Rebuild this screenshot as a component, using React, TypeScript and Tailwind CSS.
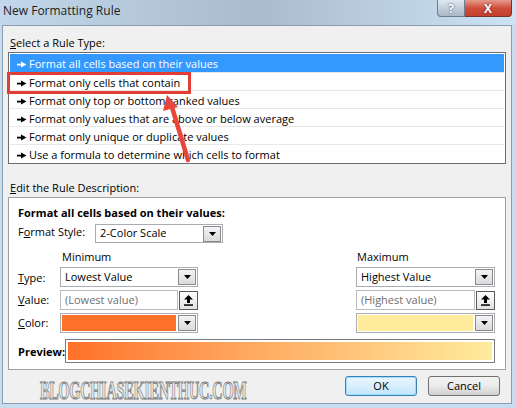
import React from "react";

const rules = [
  "Format all cells based on their values",
  "Format only cells that contain",
  "Format only top or bottom ranked values",
  "Format only values that are above or below average",
  "Format only unique or duplicate values",
  "Use a formula to determine which cells to format",
];

const Bullet = ({ color }: { color: string }) => (
  <svg width="10" height="7" viewBox="0 0 10 7" className="shrink-0">
    <rect x="0" y="2.7" width="5" height="1.8" fill={color} />
    <path d="M4 0.5 L9.5 3.5 L4 6.5Z" fill={color} />
  </svg>
);

const DropBtn = () => (
  <div className="flex h-[16px] w-[18px] shrink-0 items-center justify-center border border-[#8a8a8a] bg-gradient-to-b from-[#f4f4f4] to-[#dadada]">
    <svg width="7" height="4" viewBox="0 0 7 4">
      <path d="M0 0H7L3.5 4Z" fill="#000" />
    </svg>
  </div>
);

const Combo = ({ text, className }: { text: string; className: string }) => (
  <div className={`flex items-center justify-between border border-[#a8adb3] bg-white pl-[4px] pr-[1px] ${className}`}>
    <span>{text}</span>
    <DropBtn />
  </div>
);

const ValueBox = ({ text, className }: { text: string; className: string }) => (
  <div className={`flex h-[20px] items-center ${className}`}>
    <div className="flex h-full flex-1 items-center border border-[#b8bcc2] bg-white pl-[4px] text-[#6d6d6d]">{text}</div>
    <div className="ml-[1px] flex h-[19px] w-[19px] items-center justify-center border border-[#5a5a5a] bg-gradient-to-b from-white to-[#e2e2e2]">
      <svg width="9" height="11" viewBox="0 0 9 11">
        <path d="M4.5 0 L9 4.5 H6 V8 H3 V4.5 H0Z" fill="#000" />
        <rect x="0" y="9.3" width="9" height="1.5" fill="#000" />
      </svg>
    </div>
  </div>
);

const ColorBox = ({ color, className }: { color: string; className: string }) => (
  <div className={`flex h-[20px] items-center border border-[#a8adb3] bg-white p-[1px] ${className}`}>
    <div className={`mr-[2px] h-full flex-1 ${color}`} />
    <DropBtn />
  </div>
);

export default function App() {
  return (
    <div className="relative h-[408px] w-[516px] overflow-hidden bg-[#c7dcef] text-[11px] text-black [font-family:'Open_Sans',sans-serif]">
      {/* title bar */}
      <div className="flex h-[25px] items-start justify-between bg-gradient-to-r from-[#c2d7eb] via-[#a9bccd] to-[#cce2f5]">
        <div className="pl-[3px] pt-[3px] text-[12px] leading-[16px] text-[#1e1e1e]">New Formatting Rule</div>
        <div className="mr-[4px] flex">
          <div className="flex h-[17px] w-[28px] items-center justify-center rounded-bl-[4px] border border-t-0 border-[#6d7e92] bg-gradient-to-b from-[#dfe7f0] to-[#a9b8c9] text-[12px] font-bold leading-[15px] text-white [text-shadow:0_0_2px_#2b3d52]">
            ?
          </div>
          <div className="flex h-[17px] w-[47px] items-center justify-center rounded-br-[4px] border border-l-0 border-t-0 border-[#7a3328] bg-gradient-to-b from-[#e59a8d] via-[#cf4d3b] to-[#c4402e] text-[12px] font-bold leading-[15px] text-white [text-shadow:0_0_2px_#5a1a10]">
            X
          </div>
        </div>
      </div>

      {/* client area */}
      <div className="ml-[2px] flex h-[379px] w-[510px] flex-col border border-[#8c9bad] bg-[#f0f0f0]">
        <div className="pl-[7px] pt-[10px] leading-[14px]">
          <span className="underline">S</span>elect a Rule Type:
        </div>
        <div className="ml-[5px] mt-[2px] w-[498px] border border-[#6e6e6e] bg-white p-[1px]">
          {rules.map((r, i) => (
            <div
              key={r}
              className={`flex h-[18px] items-center gap-[2px] pl-[7px] pt-[3px] ${
                i === 0 ? "bg-[#3399ff] text-white" : "border-t border-[#e8e8e8]"
              }`}
            >
              <Bullet color={i === 0 ? "#fff" : "#000"} />
              <span>{r}</span>
            </div>
          ))}
        </div>

        <div className="mt-[17px] pl-[7px] leading-[14px]">
          <span className="underline">E</span>dit the Rule Description:
        </div>
        <div className="ml-[5px] mt-[2px] flex w-[498px] flex-col border border-[#a0a0a0] bg-white pb-[6px] pl-[9px] pr-[10px] pt-[8px]">
          <div className="font-bold leading-[14px]">Format all cells based on their values:</div>
          <div className="mt-[4px] flex">
            <div className="w-[77px] pt-[1px] leading-[14px]">
              F<span className="underline">o</span>rmat Style:
            </div>
            <Combo text="2-Color Scale" className="h-[19px] w-[128px]" />
          </div>
          <div className="mt-[7px] flex h-[14px] items-center leading-[14px]">
            <div className="w-[42px]" />
            <div className="w-[138px] pl-[2px]">Minimum</div>
            <div className="flex-1" />
            <div className="w-[139px] pl-[1px]">Maximum</div>
          </div>
          <div className="mt-[3px] flex items-center">
            <div className="w-[42px] pt-[3px]">
              <span className="underline">T</span>ype:
            </div>
            <Combo text="Lowest Value" className="h-[20px] w-[138px]" />
            <div className="flex-1" />
            <Combo text="Highest Value" className="h-[20px] w-[139px]" />
          </div>
          <div className="mt-[3px] flex items-center">
            <div className="w-[42px]">
              <span className="underline">V</span>alue:
            </div>
            <ValueBox text="(Lowest value)" className="w-[138px]" />
            <div className="flex-1" />
            <ValueBox text="(Highest value)" className="w-[139px]" />
          </div>
          <div className="mt-[3px] flex items-center">
            <div className="w-[42px]">
              <span className="underline">C</span>olor:
            </div>
            <ColorBox color="bg-[#ff7128]" className="w-[138px]" />
            <div className="flex-1" />
            <ColorBox color="bg-[#ffeb9c]" className="w-[139px]" />
          </div>
          <div className="mt-[6px] flex items-center">
            <div className="w-[47px] pt-[2px] font-bold">Preview:</div>
            <div className="h-[24px] w-[430px] border border-[#7a7a7a] p-[2px]">
              <div className="h-full w-full bg-gradient-to-r from-[#ff7128] to-[#ffeb9c]" />
            </div>
          </div>
        </div>

        <div className="mt-[6px] flex justify-end gap-[11px] pr-[11px]">
          <div className="flex h-[20px] w-[72px] items-center justify-center rounded-[3px] border border-[#3c7fb1] bg-gradient-to-b from-[#eaf6fd] via-[#d9effc] to-[#bee6fd] shadow-[inset_0_0_0_1px_#9de0fb]">
            OK
          </div>
          <div className="flex h-[20px] w-[72px] items-center justify-center rounded-[3px] border border-[#707070] bg-gradient-to-b from-[#f2f2f2] via-[#ebebeb] to-[#cfcfcf]">
            Cancel
          </div>
        </div>
      </div>

      {/* watermark */}
      <div className="absolute left-[40px] top-[378px] origin-left scale-x-[0.55] whitespace-nowrap text-[26px] font-bold leading-[26px] tracking-[-0.5px] text-[#ececec] [font-family:'Liberation_Serif',serif] [-webkit-text-stroke:1px_#7d7d7d]">
        BLOGCHIASEKIENTHUC.COM
      </div>

      {/* red highlight box */}
      <div className="absolute left-[7px] top-[72px] h-[22px] w-[184px] border-[3px] border-[#e33e36]" />

      {/* red arrow */}
      <svg className="absolute left-0 top-0" width="516" height="408" viewBox="0 0 516 408">
        <line x1="188" y1="160" x2="171" y2="104" stroke="#e8453c" strokeWidth="4.5" strokeLinecap="round" />
        <path d="M167 95 L178 107 L163 111 Z" fill="#e8453c" />
      </svg>
    </div>
  );
}
